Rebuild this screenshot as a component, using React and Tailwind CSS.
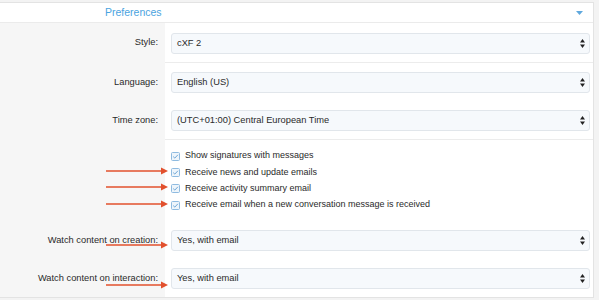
const font = { fontFamily: '"Liberation Sans", Arial, sans-serif' };

const SelectArrows = () => (
  <svg width="5" height="9" viewBox="0 0 5 9" className="shrink-0">
    <path d="M2.5 0 L5 3.5 L0 3.5 Z" fill="#222" />
    <path d="M2.5 9 L5 5.5 L0 5.5 Z" fill="#222" />
  </svg>
);

const Select = ({ value }) => (
  <div className="h-[21px] flex items-center justify-between rounded-[3px] border border-[#e1e6eb] bg-[#f6f9fc] pl-[5px] pr-[4px] text-[9.3px] text-[#2a2a2a]">
    <span>{value}</span>
    <SelectArrows />
  </div>
);

const Checkbox = () => (
  <svg width="9" height="9" viewBox="0 0 9 9" className="shrink-0">
    <rect x="0.5" y="0.5" width="8" height="8" rx="1" fill="#eef5fb" stroke="#8fbbe0" />
    <path d="M2.2 4.6 L3.8 6.1 L6.9 2.8" fill="none" stroke="#6ea6d6" strokeWidth="1" />
  </svg>
);

// red annotation arrow, drawn over the form
const Arrow = ({ top }) => (
  <svg
    className="absolute left-[106px]"
    style={{ top: top - 4 }}
    width="63"
    height="8"
    viewBox="0 0 63 8"
  >
    <line x1="0" y1="4" x2="56" y2="4" stroke="#e2502d" strokeWidth="1.6" />
    <path d="M55 0.5 L62 4 L55 7.5 Z" fill="#e2502d" />
  </svg>
);

const Row = ({ label, children, sep, className = "" }) => (
  <div className="grid grid-cols-[165px_1fr]">
    <div className="bg-[#f6f6f6] flex items-center justify-end pr-[7px] text-[9.3px] text-[#2a2a2a]">
      {label}
    </div>
    <div className={`bg-white pl-[6px] pr-[3px] ${sep ? "border-b border-[#ececec]" : ""} ${className}`}>
      {children}
    </div>
  </div>
);

const checks = [
  "Show signatures with messages",
  "Receive news and update emails",
  "Receive activity summary email",
  "Receive email when a new conversation message is received",
];

export default function App() {
  return (
    <div className="w-[599px] h-[300px] overflow-hidden bg-[#f3f3f3] pt-[2px] relative" style={font}>
      <div className="w-[594px] border-t border-r border-b border-[#e3e3e3] bg-white">
        {/* header */}
        <div className="h-[20px] flex items-center justify-between pl-[105px] pr-[10px] border-b border-[#ebebeb]">
          <span className="text-[10.5px] text-[#4aa3e0]">Preferences</span>
          <svg width="7" height="4" viewBox="0 0 7 4">
            <path d="M0 0 L7 0 L3.5 4 Z" fill="#5fa8dd" />
          </svg>
        </div>

        <Row label="Style:" sep className="pt-[10px] pb-[8px]">
          <Select value="cXF 2" />
        </Row>
        <Row label="Language:" className="py-[9px]">
          <Select value="English (US)" />
        </Row>
        <Row label="Time zone:" sep className="py-[8px]">
          <Select value="(UTC+01:00) Central European Time" />
        </Row>

        <Row label="" className="pt-[8px] pb-[9px]">
          <div className="flex flex-col">
            {checks.map((c) => (
              <div key={c} className="h-[16.3px] flex items-center gap-[5px] text-[9px] text-[#2a2a2a]">
                <Checkbox />
                <span>{c}</span>
              </div>
            ))}
          </div>
        </Row>

        <Row label="Watch content on creation:" className="pt-[8px] pb-[9px]">
          <Select value="Yes, with email" />
        </Row>
        <Row label="Watch content on interaction:" className="py-[8px]">
          <Select value="Yes, with email" />
        </Row>
      </div>

      <Arrow top={171} />
      <Arrow top={187} />
      <Arrow top={204} />
      <Arrow top={245} />
      <Arrow top={285} />
    </div>
  );
}
